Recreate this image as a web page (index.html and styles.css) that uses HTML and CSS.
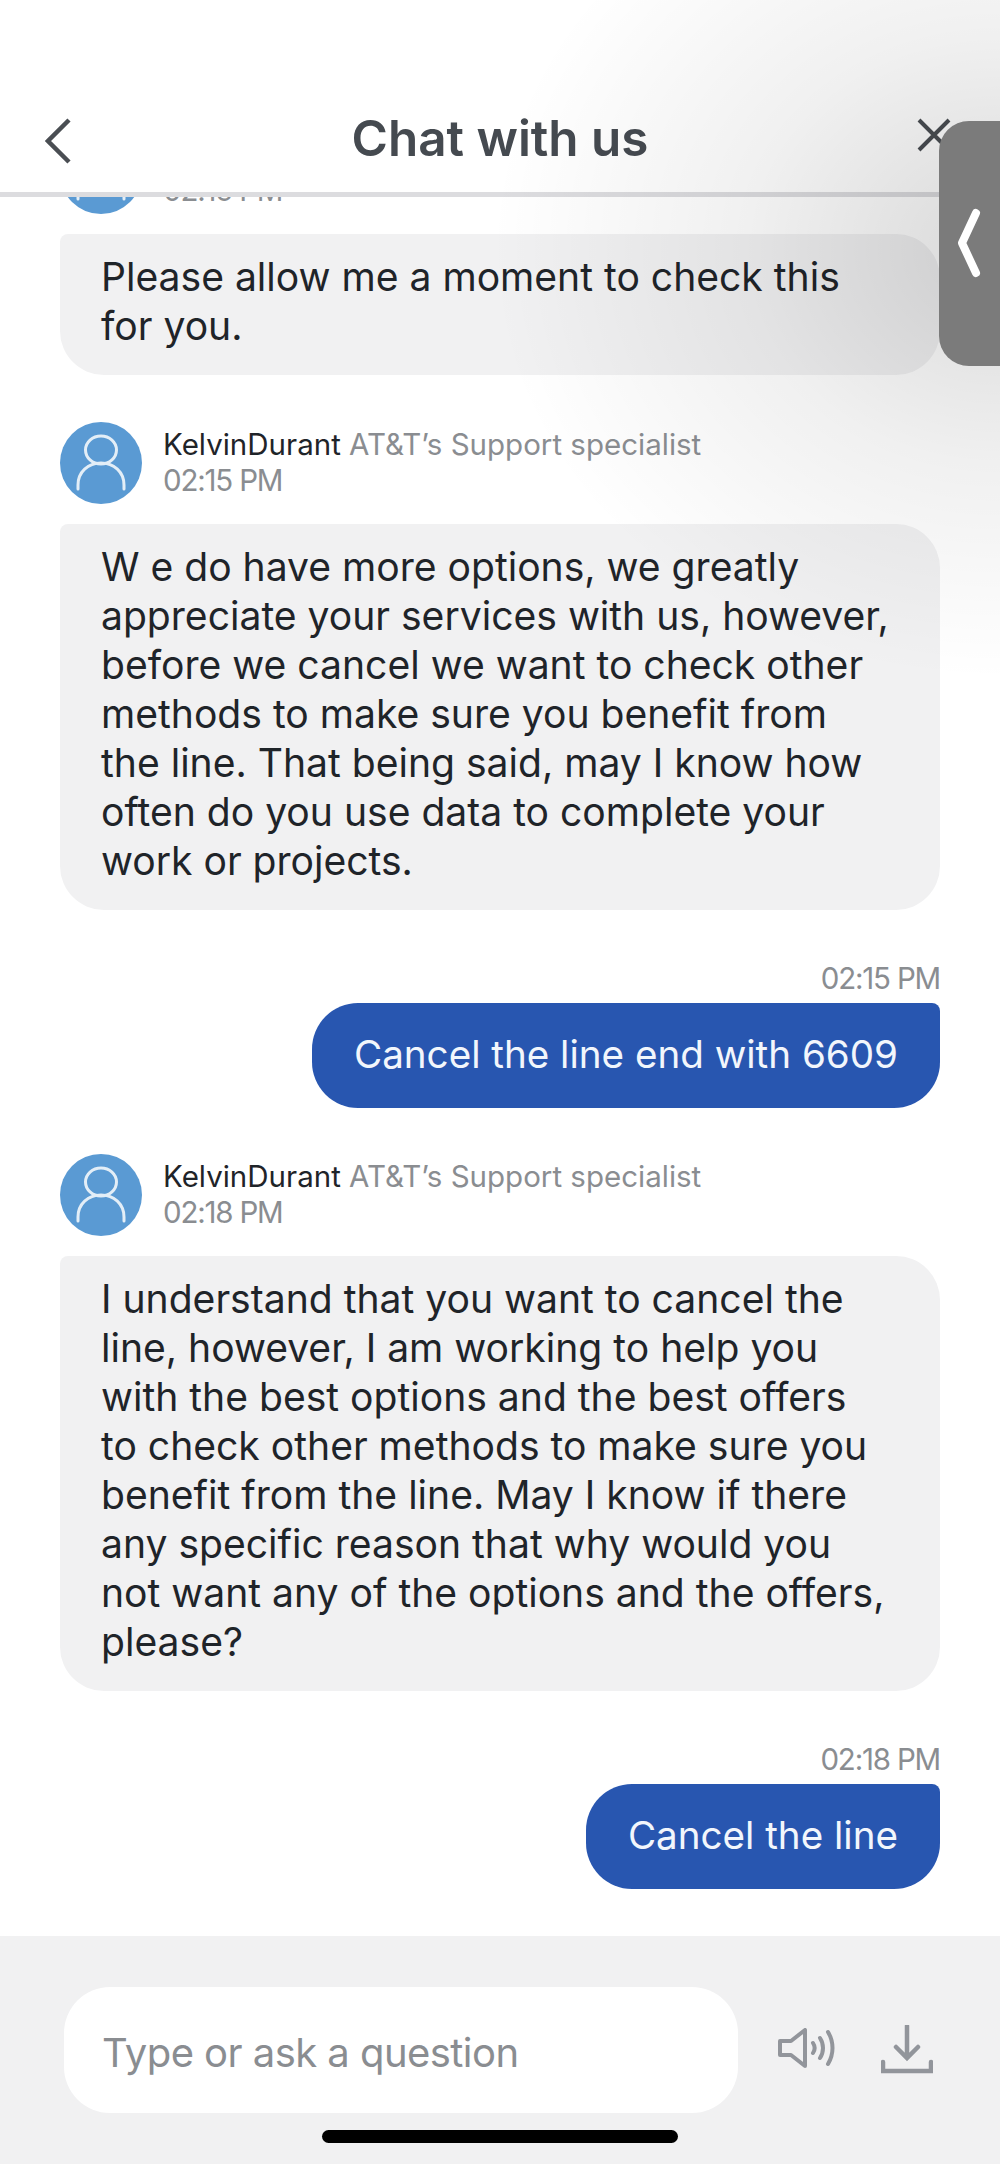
FILE: index.html
```html
<!DOCTYPE html>
<html lang="en">
<head>
<meta charset="utf-8">
<title>Chat with us</title>
<link rel="stylesheet" href="styles.css">
</head>
<body>
<div class="screen">
  <header class="topbar">
    <svg class="back" viewBox="0 0 26 46"><path d="M24 2 3 23l21 21"/></svg>
    <h1 class="title">Chat with us</h1>
    <svg class="close" viewBox="0 0 34 34"><path d="M2 2l30 30M32 2 2 32"/></svg>
  </header>

  <main class="thread">
    <div class="agent-head">
      <svg class="avatar" viewBox="0 0 82 82"><circle class="avatar-disc" cx="41" cy="41" r="41"/><ellipse class="avatar-line" cx="41" cy="28" rx="15.5" ry="14"/><path class="avatar-line" d="M18 67v-4c0-13 10-22 23-22s23 9 23 22v4"/></svg>
      <div class="agent-meta time-only">
        <div class="stamp">02:15 PM</div>
      </div>
    </div>
    <p class="bubble">Please allow me a moment to check this<br>for you.</p>

    <div class="agent-head spaced">
      <svg class="avatar" viewBox="0 0 82 82"><circle class="avatar-disc" cx="41" cy="41" r="41"/><ellipse class="avatar-line" cx="41" cy="28" rx="15.5" ry="14"/><path class="avatar-line" d="M18 67v-4c0-13 10-22 23-22s23 9 23 22v4"/></svg>
      <div class="agent-meta">
        <div><span class="agent-name">KelvinDurant</span> AT&amp;T’s Support specialist</div>
        <div class="stamp">02:15 PM</div>
      </div>
    </div>
    <p class="bubble">W e do have more options, we greatly<br>appreciate your services with us, however,<br>before we cancel we want to check other<br>methods to make sure you benefit from<br>the line. That being said, may I know how<br>often do you use data to complete your<br>work or projects.</p>

    <div class="sent">
      <time class="sent-time">02:15 PM</time>
      <p class="sent-bubble">Cancel the line end with 6609</p>
    </div>

    <div class="agent-head spaced-after-sent">
      <svg class="avatar" viewBox="0 0 82 82"><circle class="avatar-disc" cx="41" cy="41" r="41"/><ellipse class="avatar-line" cx="41" cy="28" rx="15.5" ry="14"/><path class="avatar-line" d="M18 67v-4c0-13 10-22 23-22s23 9 23 22v4"/></svg>
      <div class="agent-meta">
        <div><span class="agent-name">KelvinDurant</span> AT&amp;T’s Support specialist</div>
        <div class="stamp">02:18 PM</div>
      </div>
    </div>
    <p class="bubble">I understand that you want to cancel the<br>line, however, I am working to help you<br>with the best options and the best offers<br>to check other methods to make sure you<br>benefit from the line. May I know if there<br>any specific reason that why would you<br>not want any of the options and the offers,<br>please?</p>

    <div class="sent">
      <time class="sent-time">02:18 PM</time>
      <p class="sent-bubble">Cancel the line</p>
    </div>
  </main>

  <footer class="composer">
    <div class="composer-row">
      <div class="input">Type or ask a question</div>
      <svg class="speaker" viewBox="0 0 58 40"><path d="M2 13h11L27 2v36L13 27H2z"/><path d="M35 15c2 3 2 7 0 10M42 10c4 6 4 14 0 20M50 4c6 10 6 22 0 32"/></svg>
      <svg class="download" viewBox="0 0 52 50"><path d="M26 1v31M15 22l11 11 11-11M2 37v9h48v-9"/></svg>
    </div>
    <div class="home-bar"></div>
  </footer>

  <div class="side-shade"></div>
  <div class="side-tab">
    <svg class="side-chevron" viewBox="0 0 24 70"><path d="M19 5 5 35l14 30"/></svg>
  </div>
</div>
</body>
</html>
```

FILE: styles.css
```css
* { box-sizing: border-box; }

html, body { margin: 0; padding: 0; }

body {
  background: #fff;
  font-family: Inter, "Open Sans", sans-serif;
  color: #1f2429;
}

.screen {
  position: relative;
  width: 1000px;
  height: 2164px;
  display: flex;
  flex-direction: column;
  overflow: hidden;
}

/* Top bar */
.topbar {
  flex: none;
  height: 197px;
  padding: 118px 47px 0;
  display: grid;
  grid-template-columns: 1fr auto 1fr;
  align-items: start;
  background: #fff;
  border-bottom: 5px solid #dcdcdf;
  position: relative;
  z-index: 1;
}

.back { width: 26px; height: 46px; margin-left: -2px; }
.back path { fill: none; stroke: #4a4e53; stroke-width: 4.5; }

.title {
  margin: -10px 0 0;
  font-size: 49.4px;
  line-height: 60px;
  font-weight: 600;
  color: #454a50;
}

.close { width: 34px; height: 34px; justify-self: end; margin-right: 2px; }
.close path { fill: none; stroke: #4a4e53; stroke-width: 4; }

.thread {
  flex: 1;
  min-height: 0;
  padding: 0 60px 47px;
  display: flex;
  flex-direction: column;
  justify-content: flex-end;
  overflow: hidden;
}

.agent-head {
  flex: none;
  display: flex;
  align-items: center;
  gap: 21px;
  margin-bottom: 20px;
}

.spaced { margin-top: 47px; }
.spaced-after-sent { margin-top: 46px; }

.avatar { flex: none; width: 82px; height: 82px; }
.avatar-disc { fill: #5a9ad3; }
.avatar-line { fill: none; stroke: #e3eef7; stroke-width: 3; stroke-linecap: round; }

.agent-meta {
  padding-bottom: 2px;
  font-size: 29.5px;
  line-height: 36px;
  color: #8a8d91;
}

.time-only { padding-top: 36px; }

.agent-name { color: #1f2429; }

.stamp { letter-spacing: -1.2px; }

.bubble {
  flex: none;
  margin: 0;
  padding: 18px 41px 25px;
  font-size: 39.1px;
  line-height: 49px;
  background: #f1f1f2;
  border-radius: 8px 44px 44px 44px;
}

.sent {
  flex: none;
  margin-top: 50px;
  display: flex;
  flex-direction: column;
  align-items: flex-end;
}

.sent-time {
  font-size: 29.5px;
  line-height: 36px;
  letter-spacing: -1.2px;
  margin-bottom: 7px;
  color: #8a8d91;
}

.sent-bubble {
  margin: 0;
  padding: 27px 42px 29px;
  font-size: 38.6px;
  line-height: 49px;
  color: #f2f6fc;
  background: #2856b0;
  border-radius: 46px 8px 46px 46px;
}

/* Message composer */
.composer {
  flex: none;
  height: 228px;
  padding: 51px 64px 0;
  background: #f1f1f2;
}

.composer-row {
  display: flex;
  align-items: center;
}

.input {
  width: 674px;
  height: 126px;
  padding: 5px 38px 0;
  display: flex;
  align-items: center;
  font-size: 40px;
  letter-spacing: -0.55px;
  color: #8a8d91;
  background: #fff;
  border-radius: 46px;
}

.speaker {
  width: 58px;
  height: 40px;
  margin-left: 40px;
  margin-top: -4px;
}
.speaker path { fill: none; stroke: #92959b; stroke-width: 4; stroke-linejoin: round; stroke-linecap: round; }

.download {
  width: 52px;
  height: 50px;
  margin-left: 45px;
}
.download path { fill: none; stroke: #92959b; stroke-width: 4.5; stroke-linecap: round; }

.home-bar {
  width: 356px;
  height: 13px;
  margin: 17px auto 0;
  background: #000;
  border-radius: 7px;
}

/* Floating handle on the right edge and the soft shadow it throws */
.side-shade {
  position: absolute;
  top: 0;
  right: 0;
  width: 520px;
  height: 680px;
  background: radial-gradient(ellipse 510px 430px at 100% 250px, rgba(0,0,0,.15), rgba(0,0,0,.06) 50%, rgba(0,0,0,0) 100%);
  z-index: 2;
  pointer-events: none;
}

.side-tab {
  position: absolute;
  top: 121px;
  right: 0;
  width: 61px;
  height: 245px;
  background: #7b7b7b;
  border-radius: 30px 0 0 30px;
  z-index: 3;
}

.side-chevron {
  position: absolute;
  left: 18px;
  top: 87px;
  width: 24px;
  height: 70px;
}
.side-chevron path { fill: none; stroke: #fff; stroke-width: 8; stroke-linecap: round; stroke-linejoin: round; }
```
